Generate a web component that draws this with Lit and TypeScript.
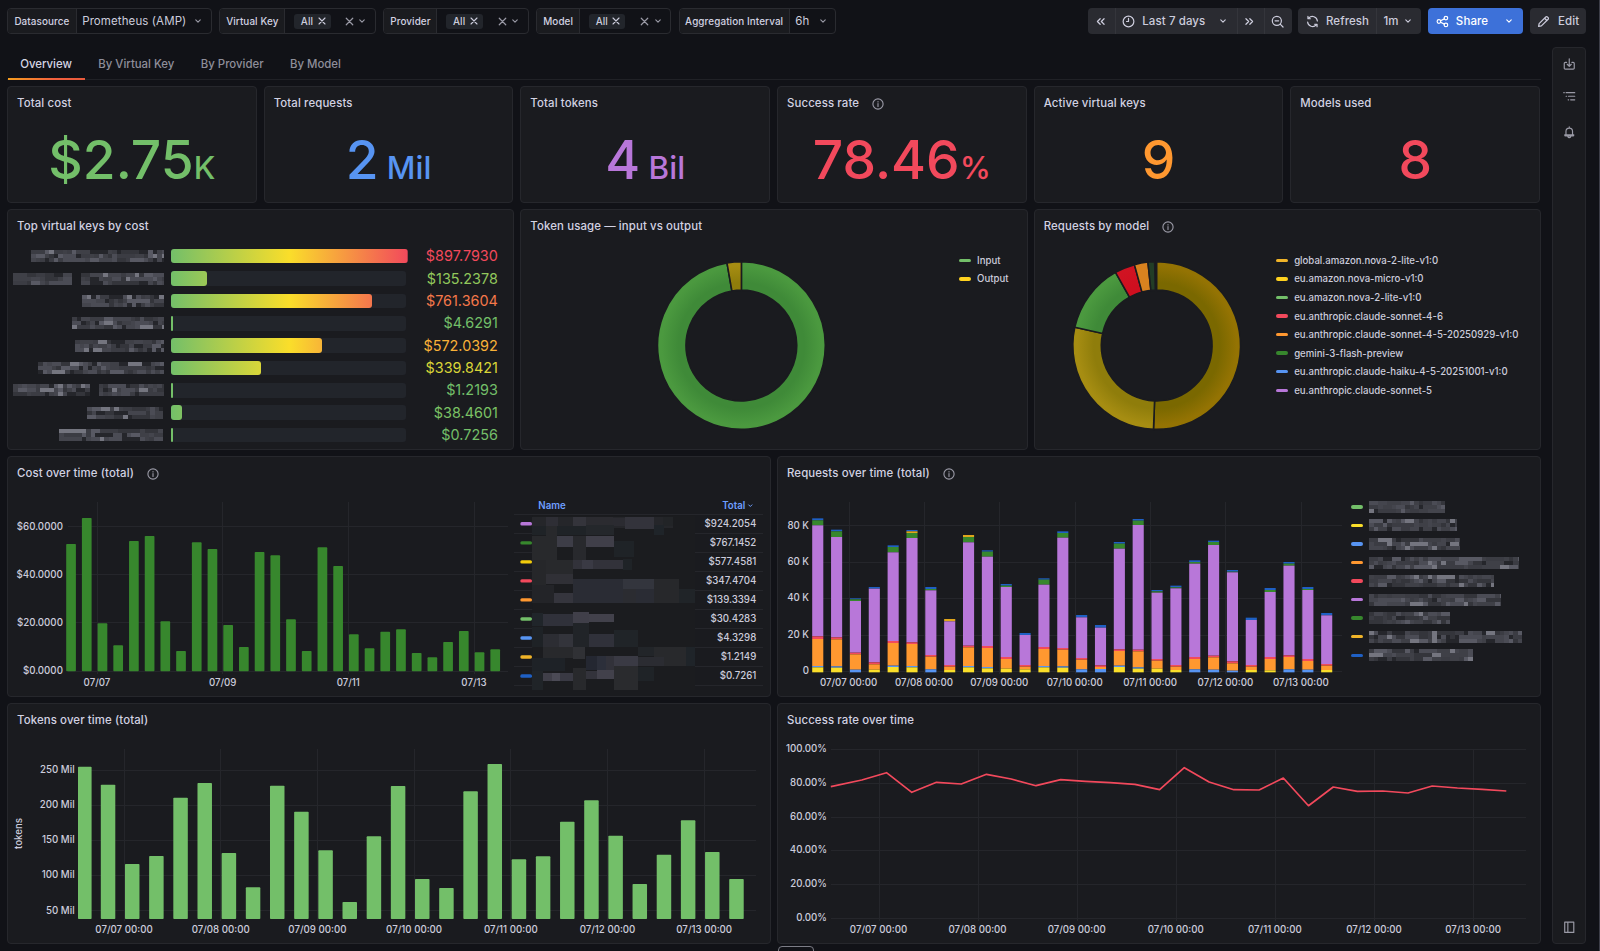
import { LitElement, html, svg, css } from "lit";
import { customElement, property } from "lit/decorators.js";

const GREEN = "#73bf69";
const DARK_GREEN = "#37872d";
const YELLOW = "#f2cc0c";
const BRIGHT_YELLOW = "#fade2a";
const RED = "#f2495c";
const ORANGE = "#ff9830";
const BLUE = "#5794f2";
const DARK_BLUE = "#1f60c4";
const PURPLE = "#b877d9";
const AMBER = "#e0a61c";

/* ---------- icons ---------- */
const icons: Record<string, unknown> = {
  chevron: svg`<path d="M5 6.6 8 9.6 11 6.6" />`,
  close: svg`<path d="M4 4 12 12M12 4 4 12" />`,
  left: svg`<path d="M7.6 4.6 4.2 8l3.4 3.4M12.4 4.6 9 8l3.4 3.4" />`,
  right: svg`<path d="M3.6 4.6 7 8l-3.4 3.4M8.4 4.6 11.8 8l-3.4 3.4" />`,
  clock: svg`<circle cx="8" cy="8" r="6.6" /><path d="M8 4.2V8H5.6" />`,
  zoom: svg`<circle cx="7.2" cy="7.2" r="5.6" /><path d="M11.3 11.3l3.5 3.5M5 7.2h4.4" />`,
  sync: svg`<path d="M2 8.6a6.1 6.1 0 0 0 10.6 3.6M14 7.4A6.1 6.1 0 0 0 3.4 3.8M2.4 1.6v3h3M13.6 14.4v-3h-3" />`,
  share: svg`<circle cx="3.6" cy="8" r="2.2" /><circle cx="12.2" cy="3.8" r="2.2" /><circle cx="12.2" cy="12.2" r="2.2" /><path d="M5.6 7l4.6-2.2M5.6 9l4.6 2.2" />`,
  pen: svg`<path d="M2 14l.6-3.4L10.8 2.4a1.4 1.4 0 0 1 2 0l.9.9a1.4 1.4 0 0 1 0 2L5.4 13.4 2 14zM9.4 4l2.8 2.8" />`,
  info: svg`<circle cx="8" cy="8" r="6.8" /><path d="M8 7.4v3.8M8 4.6v.7" />`,
  download: svg`<path d="M4.6 5.6H3A1.4 1.4 0 0 0 1.6 7v5.8A1.4 1.4 0 0 0 3 14.2h10a1.4 1.4 0 0 0 1.4-1.4V7A1.4 1.4 0 0 0 13 5.6h-1.6M8 1v9.4M5.4 8 8 10.6 10.6 8" />`,
  list: svg`<path d="M1 3.4h.6M4 3.4h11M4 8h.6M7 8h8M6.6 12.6h.6M9.8 12.6H15" />`,
  bell: svg`<path d="M8 1v1.6M3.8 11V7a4.2 4.2 0 0 1 8.4 0v4M2.2 11.4h11.6M2.2 11.4c0 .9.4 1.4 1 1.4h9.6c.6 0 1-.5 1-1.4M6.2 13.4c.3 1 .9 1.5 1.8 1.5s1.5-.5 1.8-1.5" />`,
  panel: svg`<path d="M2.2 1.4h11.6v13.2H2.2zM6.2 1.4v13.2" />`,
};

@customElement("ui-icon")
class UiIcon extends LitElement {
  @property() name = "";
  static styles = css`
    :host { display: block; flex: none; width: 13px; height: 13px; }
    .glyph { display: block; width: 100%; height: 100%; overflow: visible; fill: none;
      stroke: currentColor; stroke-width: 1.5; stroke-linecap: round; stroke-linejoin: round; }
  `;
  render() {
    return html`<svg class="glyph" viewBox="0 0 16 16">${icons[this.name]}</svg>`;
  }
}

/* ---------- redacted names ---------- */
@customElement("name-mosaic")
class NameMosaic extends LitElement {
  @property({ type: Number }) w = 100;
  @property({ type: Number }) seed = 1;
  @property({ type: Number }) gapat = -1;
  static styles = css`
    :host { display: block; flex: none; height: 12px; }
    .tiles { display: block; shape-rendering: crispEdges; }
  `;
  render() {
    const shades = ["#25262b", "#34353b", "#3b3c43", "#3f4047", "#44454d", "#4b4c55", "#585963", "#74757f"];
    let s = this.seed * 7919 + 13;
    const next = () => {
      s = (s * 48271) % 2147483647;
      return s / 2147483647;
    };
    const tiles = [];
    let last = 2;
    for (let r = 0; r < 3; r++) {
      for (let x = 0; x < this.w; x += 4.5) {
        const v = next();
        if (v > 0.3) last = v > 0.95 ? 7 : v > 0.88 ? 6 : v < 0.38 ? 0 : 1 + Math.floor(next() * 5);
        if (this.gapat >= 0 && x >= this.gapat && x < this.gapat + 7) continue;
        tiles.push(svg`<rect x=${x} y=${r * 4} width=${Math.min(4.5, this.w - x)} height="4" fill=${shades[last]} />`);
      }
    }
    return html`<svg class="tiles" width=${this.w} height="12">${tiles}</svg>`;
  }
}

/* ---------- panel ---------- */
@customElement("dash-panel")
class DashPanel extends LitElement {
  @property() heading = "";
  @property({ type: Boolean }) info = false;
  static styles = css`
    :host { display: flex; flex-direction: column; box-sizing: border-box; min-width: 0; overflow: hidden;
      background: #1a1b1f; border: 1px solid #26272c; border-radius: 4px; }
    .head { display: flex; align-items: center; gap: 13px; height: 33px; box-sizing: border-box; flex: none; padding: 0 0 2px 9px;
      font-size: 11.4px; font-weight: 500; letter-spacing: 0.12px; color: #d2d2e2; }
    .info { width: 12px; height: 12px; color: #9a9aa6; margin-top: 2px; }
    .body { display: flex; flex: 1; min-height: 0; }
  `;
  render() {
    return html`<div class="head">${this.heading}${this.info ? html`<ui-icon class="info" name="info"></ui-icon>` : ""}</div>
      <div class="body"><slot></slot></div>`;
  }
}

/* ---------- data ---------- */
const stats = [
  { title: "Total cost", big: "$2.75", unit: "K", color: GREEN },
  { title: "Total requests", big: "2", unit: " Mil", color: BLUE },
  { title: "Total tokens", big: "4", unit: " Bil", color: PURPLE },
  { title: "Success rate", big: "78.46", unit: "%", color: RED, info: true },
  { title: "Active virtual keys", big: "9", unit: "", color: ORANGE },
  { title: "Models used", big: "8", unit: "", color: RED },
];

const keys = [
  { v: "$897.7930", w: 236.7, c: "#f2495c", name: 132.7, gap: -1 },
  { v: "$135.2378", w: 36, c: "#92c85c", name: 150.7, gap: 57 },
  { v: "$761.3604", w: 201, c: "#f5784a", name: 81.7, gap: -1 },
  { v: "$4.6291", w: 2, c: "#73bf69", name: 91.7, gap: -1 },
  { v: "$572.0392", w: 151, c: "#f8b138", name: 88.7, gap: -1 },
  { v: "$339.8421", w: 90, c: "#d9d538", name: 126, gap: -1 },
  { v: "$1.2193", w: 1.6, c: "#73bf69", name: 150.7, gap: 75 },
  { v: "$38.4601", w: 11, c: "#7bc265", name: 76.3, gap: -1 },
  { v: "$0.7256", w: 1.6, c: "#73bf69", name: 104.3, gap: -1 },
];

const models: [string, string][] = [
  ["global.amazon.nova-2-lite-v1:0", "#f0b429"],
  ["eu.amazon.nova-micro-v1:0", "#ffd21f"],
  ["eu.amazon.nova-2-lite-v1:0", GREEN],
  ["eu.anthropic.claude-sonnet-4-6", RED],
  ["eu.anthropic.claude-sonnet-4-5-20250929-v1:0", ORANGE],
  ["gemini-3-flash-preview", DARK_GREEN],
  ["eu.anthropic.claude-haiku-4-5-20251001-v1:0", BLUE],
  ["eu.anthropic.claude-sonnet-5", PURPLE],
];

const costTops = [282, 204, 520, 586, 273, 258, 514, 603, 277, 297, 525, 591, 306, 316, 508, 603, 292, 348, 553, 595, 545, 538, 609, 622, 576, 543, 607, 598];

const costRows: [string, string][] = [
  ["$924.2054", PURPLE], ["$767.1452", DARK_GREEN], ["$577.4581", YELLOW], ["$347.4704", RED], ["$139.3394", ORANGE],
  ["$30.4283", GREEN], ["$4.3298", BLUE], ["$1.2149", "#f0b429"], ["$0.7261", DARK_BLUE],
];

/* x, y, width, height, colour of each obscured block in the cost legend, in thirds of a pixel */
const blocks: [number, number, number, number, string][] = [
  [67, 201, 422, 34, "#25262a"], [107, 201, 36, 26, "#2e2e35"], [189, 201, 40, 28, "#34343b"], [345, 201, 88, 35, "#33333b"],
  [229, 201, 81, 24, "#2b2b30"], [310, 204, 35, 24, "#2b2b31"], [460, 201, 29, 26, "#222427"], [67, 228, 40, 27, "#1f2327"], [141, 228, 88, 27, "#1f2327"],
  [229, 226, 83, 28, "#24272b"], [433, 226, 29, 29, "#1f2429"], [67, 258, 74, 72, "#28292c"], [107, 228, 34, 30, "#28292c"],
  [141, 258, 48, 33, "#3d3d47"], [229, 258, 83, 33, "#403f49"], [189, 258, 40, 72, "#28292d"], [312, 273, 60, 48, "#1f2327"],
  [141, 292, 48, 36, "#1b1c1f"], [67, 330, 40, 74, "#26272a"], [107, 330, 82, 42, "#28292c"], [189, 330, 150, 27, "#32323a"],
  [217, 330, 32, 27, "#3a3a44"], [339, 328, 27, 32, "#1f2327"], [107, 372, 82, 31, "#303036"], [189, 387, 244, 72, "#2a2c34"],
  [339, 387, 94, 30, "#33353d"], [433, 387, 74, 72, "#27282b"], [507, 416, 48, 43, "#202428"], [67, 404, 65, 55, "#232428"],
  [132, 430, 57, 29, "#35353d"], [339, 418, 40, 41, "#2b2c31"], [67, 488, 32, 40, "#20252a"], [99, 492, 90, 36, "#30313a"],
  [189, 487, 48, 31, "#403f49"], [237, 492, 75, 24, "#42414b"], [189, 518, 48, 72, "#212428"], [67, 530, 32, 60, "#1e2226"],
  [99, 552, 48, 39, "#2c2d33"], [147, 552, 42, 39, "#33343b"], [237, 552, 75, 39, "#30313a"], [312, 541, 72, 50, "#202428"],
  [99, 591, 90, 33, "#28292c"], [189, 591, 37, 36, "#303135"], [384, 591, 49, 26, "#222529"], [433, 591, 94, 56, "#28292c"],
  [527, 591, 28, 56, "#1f2429"], [67, 624, 97, 40, "#1e2227"], [228, 618, 33, 42, "#242731"], [261, 618, 28, 44, "#2c2f3a"],
  [289, 618, 23, 44, "#32323a"], [312, 617, 72, 30, "#3a3a44"], [384, 620, 78, 27, "#2b2c32"], [189, 655, 39, 65, "#28292c"],
  [99, 668, 26, 24, "#403f49"], [125, 668, 25, 24, "#4b4a55"], [150, 668, 39, 24, "#393943"], [228, 664, 33, 23, "#33333b"],
  [261, 661, 51, 27, "#42414b"], [312, 647, 72, 73, "#2a2b2e"], [384, 650, 48, 42, "#1f2327"], [67, 664, 32, 56, "#202428"],
];

/* tops of the segments of each bar: dark blue, amber, green, purple, red, orange, blue, yellow; 0 = absent */
const stacks: number[][] = [
  [205, 0, 211, 226, 559, 567, 648, 652], [239, 0, 244, 261, 562, 568, 649, 653], [445, 0, 448, 453, 608, 613, 659, 0],
  [411, 0, 0, 416, 637, 643, 0, 659], [286, 0, 291, 307, 573, 579, 647, 651], [240, 244, 249, 264, 577, 582, 648, 652],
  [411, 0, 417, 421, 615, 620, 658, 0], [0, 507, 0, 514, 645, 650, 0, 660], [0, 255, 261, 277, 587, 592, 648, 652],
  [301, 0, 305, 320, 588, 594, 651, 655], [402, 0, 407, 411, 621, 627, 0, 656], [549, 0, 0, 555, 645, 650, 0, 658],
  [385, 0, 389, 404, 591, 597, 648, 652], [244, 0, 249, 263, 594, 599, 649, 653], [495, 0, 0, 502, 624, 629, 658, 0],
  [525, 0, 0, 533, 646, 651, 657, 0], [276, 0, 281, 296, 598, 603, 647, 651], [207, 0, 212, 225, 599, 604, 652, 656],
  [420, 0, 424, 428, 627, 632, 0, 656], [407, 0, 412, 415, 645, 650, 0, 660], [331, 0, 336, 341, 621, 627, 658, 0],
  [272, 0, 276, 285, 617, 622, 659, 0], [360, 0, 365, 367, 634, 640, 662, 0], [503, 0, 0, 510, 645, 650, 0, 660],
  [414, 0, 420, 426, 621, 627, 0, 661], [336, 0, 341, 347, 616, 621, 658, 0], [411, 0, 417, 420, 627, 633, 659, 0],
  [489, 0, 0, 496, 642, 647, 0, 660],
];
const stackColors = [DARK_BLUE, AMBER, DARK_GREEN, PURPLE, RED, ORANGE, BLUE, BRIGHT_YELLOW];

const requestLegend: [string, number][] = [
  [GREEN, 76.7], [BRIGHT_YELLOW, 88.7], [BLUE, 91.7], [ORANGE, 150.3], [RED, 125.7], [PURPLE, 132.3], [DARK_GREEN, 81.7], ["#f0b429", 153.7], [DARK_BLUE, 104.3],
];

const tokenTops = [200, 254, 492, 468, 293, 249, 459, 562, 257, 335, 451, 606, 409, 258, 537, 564, 274, 192, 478, 469, 365, 301, 407, 552, 464, 361, 456, 537];

const ratePoints: [number, number][] = [
  [106, 260], [165, 240], [212, 218], [260, 277], [307, 247], [354, 252], [402, 223], [449, 237], [496, 257], [543, 239], [590, 244],
  [637, 248], [684, 253], [731, 269], [778, 203], [825, 246], [872, 269], [920, 270], [966, 234], [1014, 317], [1061, 261],
  [1107, 274], [1155, 273], [1203, 279], [1249, 258], [1297, 264], [1344, 268], [1390, 273],
];

const days = ["07/07 00:00", "07/08 00:00", "07/09 00:00", "07/10 00:00", "07/11 00:00", "07/12 00:00", "07/13 00:00"];

/* ---------- drawing helpers ---------- */
const hline = (x1: number, x2: number, y: number) => svg`<rect class="grid" x=${x1} y=${Math.round(y - 0.5)} width=${x2 - x1} height="1" />`;
const vline = (x: number, y1: number, y2: number) => svg`<rect class="grid" x=${Math.round(x - 0.5)} y=${y1} width="1" height=${y2 - y1} />`;
const yText = (x: number, y: number, t: string) => svg`<text class="tick end" x=${x} y=${y + 3.2}>${t}</text>`;
const xText = (x: number, y: number, t: string) => svg`<text class="tick mid" x=${x} y=${y + 3.9}>${t}</text>`;

function arc(cx: number, cy: number, ro: number, ri: number, a: number, b: number) {
  const pt = (r: number, deg: number) => {
    const t = ((deg - 90) * Math.PI) / 180;
    return `${(cx + r * Math.cos(t)).toFixed(2)} ${(cy + r * Math.sin(t)).toFixed(2)}`;
  };
  const big = b - a > 180 ? 1 : 0;
  return `M${pt(ro, a)}A${ro} ${ro} 0 ${big} 1 ${pt(ro, b)}L${pt(ri, b)}A${ri} ${ri} 0 ${big} 0 ${pt(ri, a)}Z`;
}

function donut(cx: number, cy: number, id: string, slices: [number, number, string, string][]) {
  return slices.map(([a, b, inner, outer], i) => svg`
    <radialGradient id=${id + i} gradientUnits="userSpaceOnUse" cx=${cx} cy=${cy} r="84">
      <stop offset="0.75" stop-color=${inner} /><stop offset="0.95" stop-color=${outer} />
    </radialGradient>
    <path class="slice" d=${arc(cx, cy, 83.9, 55.4, a, b)} fill=${`url(#${id + i})`} />`);
}

@customElement("app-root")
class AppRoot extends LitElement {
  static styles = css`
    :host { display: block; box-sizing: border-box; width: 1600px; height: 951px; overflow: hidden; background: #111217;
      color: #ccccdc; font-family: Inter, "Liberation Sans", sans-serif; border-right: 1px solid #3c3d47; position: relative; }
    .toolbar { display: flex; align-items: center; gap: 7.5px; padding: 8px 13.2px 0 7.2px; height: 26px; }
    .var { display: flex; box-sizing: border-box; height: 26px; border: 1px solid #2a2b30; border-radius: 4px; overflow: hidden; }
    .var .label { box-sizing: border-box; display: flex; align-items: center; justify-content: center; flex: none; background: #1a1b1f;
      border-right: 1px solid #2a2b30; font-size: 9.9px; font-weight: 500; white-space: nowrap; letter-spacing: 0.1px; color: #d2d2e2; }
    .var .field { display: flex; align-items: center; flex: 1; min-width: 0; font-size: 11.5px; letter-spacing: 0.1px; white-space: nowrap; color: #ccccdc; }
    .ds { width: 204.6px; } .ds .label { width: 68.5px; } .var.ds .field { padding: 0 6.5px 0 5.5px; justify-content: space-between; }
    .vk { width: 156.7px; } .vk .label { width: 65px; }
    .pv { width: 145.2px; } .pv .label { width: 53px; }
    .md { width: 135px; } .md .label { width: 43px; }
    .ag { width: 157.4px; } .ag .label { width: 110px; } .var.ag .field { padding: 0 6.5px 0 5.5px; justify-content: space-between; }
    .var .multi { padding-left: 9px; }
    .pill { display: flex; align-items: center; gap: 2.5px; height: 15px; padding: 0 3px 0 6.5px; background: #22252b; border-radius: 3px; font-size: 9.9px; font-weight: 500; }
    .pill .x { width: 12px; height: 12px; }
    .clear { width: 13px; height: 13px; margin-left: auto; color: #9a9aa6; }
    .chev { width: 12px; height: 12px; color: #9a9aa6; }
    .multi .chev { margin: 0 6.5px 0 0.5px; }
    .actions { display: flex; gap: 6.75px; margin-left: auto; }
    .group { display: flex; height: 26px; background: #2a2b31; border-radius: 4px; overflow: hidden; font-size: 11.5px; font-weight: 500; color: #ccccdc; letter-spacing: 0.1px; }
    .btn { display: flex; align-items: center; box-sizing: border-box; white-space: nowrap; }
    .btn + .btn { border-left: 1px solid #34353b; }
    .group .chev { color: inherit; }
    .prev { width: 27px; padding-left: 6.5px; }
    .range { width: 122px; padding: 0 8px 0 6.5px; gap: 7px; } .range .chev { margin-left: auto; }
    .next { width: 27px; padding-left: 5.5px; }
    .out { width: 28px; padding-left: 6.5px; }
    .refresh { width: 78px; padding-left: 7.5px; gap: 7px; }
    .every { width: 45px; padding-left: 6px; gap: 3.5px; }
    .share { background: #3d71d9; color: #fff; }
    .share .main { width: 95.1px; padding: 0 8px 0 7.7px; gap: 7px; } .share .chev { margin-left: auto; }
    .edit { width: 55.8px; padding-left: 7px; gap: 8px; }

    .frame { display: flex; margin-top: 13px; padding: 0 13px 0 7px; justify-content: space-between; }
    .main-col { width: 1534px; }
    .tabs { display: flex; box-sizing: border-box; height: 33px; border-bottom: 1px solid #202126; font-size: 11.4px; color: #8e8e9a; letter-spacing: 0; font-weight: 500; }
    .tab { display: flex; align-items: center; box-sizing: border-box; height: 33px; padding: 0 13.2px; position: relative; white-space: nowrap; }
    .tab.on { color: #d5d5e4; }
    .tab.on::after { content: ""; position: absolute; left: 0.5px; right: 0; bottom: 0; height: 2px; background: linear-gradient(90deg, #f59d1f, #f2603e 60%, #e85a3c); }
    .row { display: grid; gap: 6px; margin-top: 6px; height: 241px; }
    .r6 { grid-template-columns: repeat(6, 1fr); gap: 7px; width: 1533px; height: 117px; }
    .r3 { grid-template-columns: repeat(3, 1fr); }
    .r2 { grid-template-columns: repeat(2, 1fr); }

    .stat { flex: 1; text-align: center; font-size: 53.3px; font-weight: 500; line-height: 60px; padding-top: 10px; white-space: pre; }
    .stat .unit { font-size: 31.4px; }

    .gauges { display: flex; flex-direction: column; flex: 1; gap: 7.37px; padding: 5.7px 15.5px 0 0; }
    .gauge { display: flex; align-items: center; height: 15px; }
    .gname { width: 155.7px; flex: none; display: flex; justify-content: flex-end; }
    .track { width: 234.7px; height: 14.6px; margin-left: 7.3px; flex: none; background: #22252b; border-radius: 3px; }
    .fill { height: 100%; border-radius: 3px; background: linear-gradient(90deg, #73bf69, #fade2a 50%, #f2495c) 0 0 / 236.7px 100% no-repeat; }
    .gval { flex: 1; text-align: right; font-size: 14.4px; line-height: 15px; padding-bottom: 1px; }

    .chart { display: block; flex: none; overflow: visible; }
    .grid { fill: #25262b; shape-rendering: crispEdges; }
    .tick { font-family: Inter, "Liberation Sans", sans-serif; font-size: 9.7px; font-weight: 500; fill: #ccccdc; }
    .tick.th { fill: #6e9fff; font-weight: 600; }
    .end { text-anchor: end; } .mid { text-anchor: middle; }
    .slice { stroke: #1a1b1f; stroke-width: 1.6; }
    .rate { fill: none; stroke: #f2495c; stroke-width: 1.7; stroke-linejoin: round; }

    .legend { display: flex; flex-direction: column; font-size: 9.65px; font-weight: 500; letter-spacing: 0; padding-top: 8.1px; }
    .item { display: flex; align-items: center; gap: 6.5px; height: 18.55px; white-space: nowrap; }
    .swatch { width: 11.5px; height: 3.4px; border-radius: 2px; flex: none; }
    .names { padding-top: 7.6px; } .names .item { gap: 6px; }

    .rail { display: flex; flex-direction: column; align-items: center; box-sizing: border-box; width: 34px; height: 897px; border: 1px solid #26272c;
      border-radius: 4px; background: #1a1b1f; color: #9a9aa6; padding-top: 10px; }
    .rail ui-icon { width: 12.5px; height: 12.5px; }
    .rail .i2 { margin-top: 19px; } .rail .i3 { margin-top: 23.5px; } .rail .i4 { margin-top: auto; margin-bottom: 10px; }
    .handle { position: absolute; left: 778px; top: 946px; width: 36px; height: 12px; box-sizing: border-box; border: 1px solid #7c7d86; border-radius: 4px; background: #111217; }
  `;

  variable(cls: string, label: string) {
    return html`<div class="var ${cls}"><div class="label">${label}</div>
      <div class="field multi"><div class="pill">All<ui-icon class="x" name="close"></ui-icon></div>
      <ui-icon class="clear" name="close"></ui-icon><ui-icon class="chev" name="chevron"></ui-icon></div></div>`;
  }

  legendItem(name: string, color: string) {
    return html`<div class="item"><div class="swatch" style="background:${color}"></div>${name}</div>`;
  }

  costChart() {
    const ys = [671, 622.7, 574.7, 526.3];
    const xs = [97, 222.7, 348.3, 474];
    return html`<svg class="chart" width="762" height="206" viewBox="8 490 762 206">
      ${ys.map((y, i) => svg`${hline(68, 508, y)}${yText(62.9, y, `$${i * 20}.0000`)}`)}
      ${xs.map((x, i) => svg`${vline(x, 502, 674)}${xText(x, 682.5, ["07/07", "07/09", "07/11", "07/13"][i])}`)}
      ${costTops.map((t, i) => {
        const y = 450 + t / 3;
        return svg`<rect x=${66.2 + i * 15.71} y=${y} width="9.7" height=${671.2 - y} rx="0.8" fill=${DARK_GREEN} />`;
      })}
      <text class="tick th" x="538.3" y="508.7">Name</text>
      <text class="tick end th" x="745.3" y="508.7">Total</text>
      <path d="M748.4 504.6l1.9 1.9 1.9-1.9" fill="none" stroke="#6e9fff" stroke-width="1" />
      ${Array.from({ length: 10 }, (_, i) => hline(514, 763, 514.5 + i * 19.03))}
      <rect x="532.3" y="515.5" width="162.7" height="174.5" fill="#1b1c1f" />
      ${blocks.map(([x, y, w, h, c]) => svg`<rect x=${510 + x / 3} y=${450 + y / 3} width=${w / 3} height=${h / 3} fill=${c} shape-rendering="crispEdges" />`)}
      ${costRows.map(([v, c], i) => svg`<rect x="520.3" y=${522.1 + i * 19.03} width="11.7" height="3.4" rx="1.6" fill=${c} />
        <text class="tick end" x="756.3" y=${527.2 + i * 19}>${v}</text>`)}
    </svg>`;
  }

  requestChart() {
    return html`<svg class="chart" width="573" height="206" viewBox="778 490 573 206">
      ${[0, 1, 2, 3, 4].map((i) => svg`${hline(812, 1341.5, 671.5 - i * 36.4)}${yText(809, 671 - i * 36.4, i ? `${i * 20} K` : "0")}`)}
      ${days.map((d, i) => svg`${vline(849 + i * 75.37, 502, 674)}${xText(848.6 + i * 75.37, 682.5, d)}`)}
      ${stacks.map((tops, i) => {
        const x = 812.2 + i * 18.85;
        const present = tops.map((t, k) => [t, k]).filter(([t]) => t > 0);
        return present.map(([t, k], n) => {
          const end = n + 1 < present.length ? present[n + 1][0] : 667;
          return svg`<rect x=${x} y=${450 + t / 3} width="11.1" height=${(end - t) / 3} fill=${stackColors[k]} />`;
        });
      })}
    </svg>`;
  }

  tokenChart() {
    return html`<svg class="chart" width="762" height="206" viewBox="8 737 762 206">
      ${[50, 100, 150, 200, 250].map((v, i) => svg`${hline(78, 756, 910.7 - i * 35.17)}${yText(74.6, 910.3 - i * 35.17, `${v} Mil`)}`)}
      ${days.map((d, i) => svg`${vline(124 + i * 96.7, 749, 921)}${xText(124 + i * 96.7, 929.3, d)}`)}
      <text class="tick mid" transform="translate(22 833.5) rotate(-90)">tokens</text>
      ${tokenTops.map((t, i) => {
        const x = i ? 100.8 + (i - 1) * 24.17 : 78;
        const y = 700 + t / 3;
        return svg`<rect x=${x} y=${y} width=${i ? 14.5 : 13.6} height=${919 - y} rx="0.8" fill=${GREEN} />`;
      })}
    </svg>`;
  }

  rateChart() {
    const pts = ratePoints.map(([x, y]) => `${(775 + x / 1.9006).toFixed(1)},${(700 + y / 3).toFixed(1)}`).join(" ");
    return html`<svg class="chart" width="762" height="206" viewBox="778 737 762 206">
      ${[0, 20, 40, 60, 80, 100].map((v, i) => svg`${hline(831, 1526, 918.5 - i * 33.8)}${yText(827, 917.8 - i * 33.8, `${v}.00%`)}`)}
      ${days.map((d, i) => svg`${vline(879.2 + i * 99, 749, 921)}${xText(878.5 + i * 99.1, 929.3, d)}`)}
      <polyline class="rate" points=${pts} />
    </svg>`;
  }

  render() {
    return html`
      <div class="toolbar">
        <div class="var ds"><div class="label">Datasource</div><div class="field">Prometheus (AMP)<ui-icon class="chev" name="chevron"></ui-icon></div></div>
        ${this.variable("vk", "Virtual Key")}${this.variable("pv", "Provider")}${this.variable("md", "Model")}
        <div class="var ag"><div class="label">Aggregation Interval</div><div class="field">6h<ui-icon class="chev" name="chevron"></ui-icon></div></div>
        <div class="actions">
          <div class="group">
            <div class="btn prev"><ui-icon name="left"></ui-icon></div>
            <div class="btn range"><ui-icon name="clock"></ui-icon>Last 7 days<ui-icon class="chev" name="chevron"></ui-icon></div>
            <div class="btn next"><ui-icon name="right"></ui-icon></div>
            <div class="btn out"><ui-icon name="zoom"></ui-icon></div>
          </div>
          <div class="group">
            <div class="btn refresh"><ui-icon name="sync"></ui-icon>Refresh</div>
            <div class="btn every">1m<ui-icon class="chev" name="chevron"></ui-icon></div>
          </div>
          <div class="group share"><div class="btn main"><ui-icon name="share"></ui-icon>Share<ui-icon class="chev" name="chevron"></ui-icon></div></div>
          <div class="group"><div class="btn edit"><ui-icon name="pen"></ui-icon>Edit</div></div>
        </div>
      </div>
      <div class="frame">
        <div class="main-col">
          <div class="tabs">
            <div class="tab on">Overview</div><div class="tab">By Virtual Key</div><div class="tab">By Provider</div><div class="tab">By Model</div>
          </div>
          <div class="row r6">
            ${stats.map((s) => html`<dash-panel heading=${s.title} ?info=${!!s.info}>
              <div class="stat" style="color:${s.color}">${s.big}<span class="unit">${s.unit}</span></div></dash-panel>`)}
          </div>
          <div class="row r3">
            <dash-panel heading="Top virtual keys by cost">
              <div class="gauges">
                ${keys.map((k, i) => html`<div class="gauge">
                  <div class="gname"><name-mosaic .w=${k.name} .seed=${i + 3} .gapat=${k.gap}></name-mosaic></div>
                  <div class="track"><div class="fill" style="width:${k.w}px"></div></div>
                  <div class="gval" style="color:${k.c}">${k.v}</div></div>`)}
              </div>
            </dash-panel>
            <dash-panel heading="Token usage — input vs output">
              <svg class="chart" width="437.7" height="206" viewBox="521.3 243 437.7 206">
                ${donut(741.7, 345.5, "t", [[0, 350.1, "#3f8a38", "#4b993f"], [350.1, 360, "#8f7d0b", "#a68d12"]])}
              </svg>
              <div class="legend">${this.legendItem("Input", GREEN)}${this.legendItem("Output", "#ffd21f")}</div>
            </dash-panel>
            <dash-panel heading="Requests by model" info>
              <svg class="chart" width="241.5" height="206" viewBox="1035.2 243 241.5 206">
                ${donut(1156.9, 345.5, "m", [
                  [0, 182.2, "#7a6800", "#947303"], [182.2, 282.6, "#8f7d0b", "#a68d12"], [282.6, 330.6, "#3f8a38", "#4b993f"],
                  [330.6, 344.6, "#cf0f1f", "#d01322"], [344.6, 354, "#d9821f", "#d9821f"], [354, 358.6, "#223d26", "#223d26"],
                ])}
              </svg>
              <div class="legend">${models.map(([n, c]) => this.legendItem(n, c))}</div>
            </dash-panel>
          </div>
          <div class="row r2">
            <dash-panel heading="Cost over time (total)" info>${this.costChart()}</dash-panel>
            <dash-panel heading="Requests over time (total)" info>
              ${this.requestChart()}
              <div class="legend names">
                ${requestLegend.map(([c, w], i) => html`<div class="item"><div class="swatch" style="background:${c}"></div><name-mosaic .w=${w} .seed=${i + 21}></name-mosaic></div>`)}
              </div>
            </dash-panel>
          </div>
          <div class="row r2">
            <dash-panel heading="Tokens over time (total)">${this.tokenChart()}</dash-panel>
            <dash-panel heading="Success rate over time">${this.rateChart()}</dash-panel>
          </div>
        </div>
        <div class="rail">
          <ui-icon name="download"></ui-icon><ui-icon class="i2" name="list"></ui-icon><ui-icon class="i3" name="bell"></ui-icon><ui-icon class="i4" name="panel"></ui-icon>
        </div>
      </div>
      <div class="handle"></div>
    `;
  }
}
